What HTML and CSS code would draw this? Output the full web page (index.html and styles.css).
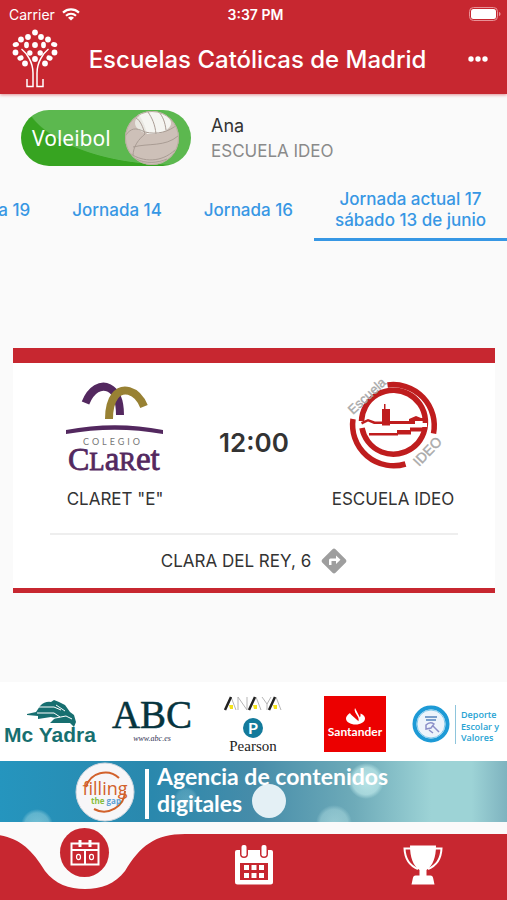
FILE: index.html
```html
<!DOCTYPE html>
<html lang="es">
<head>
<meta charset="UTF-8">
<meta name="viewport" content="width=device-width, initial-scale=1.0">
<title>Escuelas Católicas de Madrid</title>
<link rel="stylesheet" href="styles.css">
</head>
<body>

<header class="app-header">
    <div class="status-bar">
        <div class="carrier">
            <span>Carrier</span>
            <svg width="18" height="13" viewBox="0 0 18 13" fill="none" stroke="#fff" stroke-width="2.2">
                <path d="M1 4.6C5.6.4 12.4.4 17 4.6M4 7.8c2.9-2.6 7.1-2.6 10 0"/>
                <path d="M9 12.6L6 9.7c1.8-1.5 4.2-1.5 6 0z" fill="#fff" stroke="none"/>
            </svg>
        </div>
        <span class="clock">3:37 PM</span>
        <svg class="battery" width="33" height="14" viewBox="0 0 33 14">
            <rect x=".5" y=".5" width="28" height="13" rx="4" fill="none" stroke="#e89297"/>
            <rect x="2" y="2" width="25" height="10" rx="2.500" fill="#fff"/>
            <path d="M30 5c2 .6 2 3.400 0 4z" fill="#e89297"/>
        </svg>
    </div>
    <div class="title-bar">
        <svg class="tree" width="48" height="60" viewBox="0 0 48 60">
            <g fill="#fff">
                <circle cx="24" cy="3.500" r="2.900"/>
                <circle cx="17" cy="8" r="2.900"/>
                <circle cx="30" cy="8" r="2.900"/>
                <circle cx="10" cy="10.500" r="2.900"/>
                <circle cx="37" cy="10.500" r="2.900"/>
                <ellipse cx="4.800" cy="15.500" rx="3.200" ry="2.400" transform="rotate(-20 4.800 15.500)"/>
                <ellipse cx="15.500" cy="16" rx="2.400" ry="3.200"/>
                <circle cx="24" cy="16" r="2.900"/>
                <ellipse cx="32.500" cy="16" rx="2.400" ry="3.200"/>
                <ellipse cx="43.200" cy="15.500" rx="3.200" ry="2.400" transform="rotate(20 43.200 15.500)"/>
                <circle cx="4.500" cy="23.500" r="2.900"/>
                <circle cx="18.800" cy="24" r="2.700"/>
                <circle cx="29.200" cy="24" r="2.700"/>
                <circle cx="43.500" cy="23.500" r="2.900"/>
                <ellipse cx="9.500" cy="29" rx="3.200" ry="2.500" transform="rotate(-25 9.500 29)"/>
                <circle cx="24" cy="30" r="2.900"/>
                <ellipse cx="38.500" cy="29" rx="3.200" ry="2.500" transform="rotate(25 38.500 29)"/>
                <circle cx="14" cy="34.500" r="2.900"/>
                <circle cx="34" cy="34.500" r="2.900"/>
            </g>
            <g fill="none" stroke="#fff" stroke-width="1.500">
                <path d="M10.500 20c5 4 11.500 13 11.500 24v13.500h-6V50"/>
                <path d="M37.500 20c-5 4-11.500 13-11.500 24v13.500h6V50"/>
            </g>
        </svg>
        <h1>Escuelas Católicas de Madrid</h1>
        <button class="more" aria-label="Más opciones">
            <svg width="20" height="6" viewBox="0 0 20 6" fill="#fff">
                <circle cx="3" cy="3" r="2.700"/>
                <circle cx="10" cy="3" r="2.700"/>
                <circle cx="17" cy="3" r="2.700"/>
            </svg>
        </button>
    </div>
</header>

<section class="profile">
    <button class="sport">
        <span>Voleibol</span>
        <svg width="56" height="56" viewBox="0 0 56 56">
            <defs>
                <clipPath id="ball"><circle cx="28" cy="28" r="27"/></clipPath>
            </defs>
            <circle cx="28" cy="28" r="27" fill="#cdc0b8"/>
            <g clip-path="url(#ball)">
                <ellipse cx="29" cy="13" rx="18" ry="11" fill="#e9e8e2"/>
                <path d="M14 4c4 4 8 14 9 20 14 1 24-6 24-11-2-7-9-11-19-12z" fill="#f5f5f1"/>
                <path d="M12 8c4 2 7 9 9 16M24 2c4 6 7 12 8 22M35 2c4 5 6 10 7 18M1 26c6-8 10-9 20-4 12 3 24 0 33-8M21 24c-6 5-12 12-12 22M9 37c16-4 32 0 45-11M7 44c12 8 30 9 44-4M12 49c10 5 22 4 31 0" fill="none" stroke="#a99c94" stroke-width="1"/>
            </g>
            <circle cx="28" cy="28" r="26.500" fill="none" stroke="#b9ae9f"/>
        </svg>
    </button>
    <div class="player">
        <p class="player-name">Ana</p>
        <p class="player-team">ESCUELA IDEO</p>
    </div>
</section>

<nav class="tabs">
    <button class="tab">Jornada 19</button>
    <button class="tab">Jornada 14</button>
    <button class="tab">Jornada 16</button>
    <button class="tab active">Jornada actual 17<br>sábado 13 de junio</button>
</nav>

<main class="content">
    <article class="match">
        <div class="teams">
            <div class="team">
                <svg width="102" height="94" viewBox="0 0 102 94">
                    <path d="M21.500 23C27 9 37 4 45 8c8 4 11 13 11 27" fill="none" stroke="#53285f" stroke-width="8"/>
                    <path d="M45 39C45 18 54 8 65 11c7 2 12 8 15 15.500" fill="none" stroke="#988133" stroke-width="8"/>
                    <path d="M2 50Q51 40.500 99 50v4Q51 45.500 2 54z" fill="#53285f"/>
                    <text class="claret-top" x="19" y="65">COLEGIO</text>
                    <text class="claret-name" x="4" y="90">C<tspan class="cap">L</tspan><tspan class="low">a</tspan><tspan class="cap">R</tspan><tspan class="low">et</tspan></text>
                </svg>
                <p>CLARET "E"</p>
            </div>
            <time class="hour">12:00</time>
            <div class="team">
                <svg width="96" height="94" viewBox="0 0 96 94">
                    <g fill="none" stroke="#bf1d1e" stroke-width="5.500">
                        <path d="M42.500 5A41 41 0 0 1 88.500 53.500"/>
                        <path d="M8 39A41 41 0 0 0 60.500 84"/>
                        <path d="M16.500 41A32 32 0 1 1 17 48"/>
                    </g>
                    <path d="M14 45l8-4 9 3h32v-1h19v4H68v3H55v-3H30l-8-3-7 3z" fill="#fff"/>
                    <path d="M16 42l7-3 7 2.500h7V29h2v-5h1.500v5H45v12h19v-2l7-3 5 2h6v3H70v3H45v1.500h-8V44h-8l-6-2.500-6 3z" fill="#bf1d1e"/>
                    <path d="M24 53h28v-3h13v-2.500h16v4H66v3H53v1H24z" fill="#bf1d1e"/>
                    <text class="ideo-text" transform="translate(8 35) rotate(-43)">Escuela</text>
                    <text class="ideo-text big" transform="translate(74 87) rotate(-46)">IDEO</text>
                </svg>
                <p>ESCUELA IDEO</p>
            </div>
        </div>
        <a class="place" href="#">
            <span>CLARA DEL REY, 6</span>
            <svg width="26" height="26" viewBox="0 0 26 26">
                <path d="M13 .5q.8 0 1.500.7l10.300 10.300q1.400 1.500 0 3L14.500 24.800q-1.500 1.400-3 0L1.200 14.500q-1.400-1.500 0-3L11.500 1.200Q12.200.5 13 .5z" fill="#9e9e9e"/>
                <path d="M8 17v-5q0-1.500 1.500-1.500H15V7.500l4.500 4.300L15 16v-3h-4.500v4z" fill="#fff"/>
            </svg>
        </a>
    </article>
</main>

<section class="sponsors">
    <svg width="94" height="50" viewBox="0 0 94 50">
        <path d="M23 15l9-2 4-6q5-5 11-4l3-2 5 2 6 3 5 7 4 3 2 7-2 5-4-4H46l5-5-4-1-13 2v-3l-11-1z" fill="#176f70"/>
        <path d="M35 8h15l7 3M33 14h17l6 4M46 20l16-3 6 3M52 6l9 6" fill="none" stroke="#fff" stroke-width="1"/>
        <text class="yadra" x="0" y="43">Mc Yadra</text>
    </svg>
    <svg width="84" height="50" viewBox="0 0 84 50">
        <text class="abc" x="42" y="29">ABC</text>
        <text class="abc-web" x="42" y="42">www.abc.es</text>
    </svg>
    <svg width="62" height="60" viewBox="0 0 62 60">
        <g fill="none" stroke="#b5b5b5" stroke-width="1">
            <path d="M9 3l5 13M16 16V3l9 13V3M34 3l5 13M40 3l5 7 4-7M45 10v6M54 3l5 13"/>
        </g>
        <path d="M3 16l6-13M27 16l6-13M47 16l6-13" stroke="#222" stroke-width="2.500"/>
        <path d="M7 11h4v4H8zM31 11h4v4h-3zM51 11h4v4h-3z" fill="#f3e21b"/>
        <circle cx="31" cy="34" r="10" fill="#137a9b"/>
        <text class="pearson-p" x="31" y="40">P</text>
        <text class="pearson" x="31" y="57">Pearson</text>
    </svg>
    <svg width="62" height="56" viewBox="0 0 62 56">
        <path d="M0 0h62v56H0z" fill="#ec0000"/>
        <path d="M26 17c-3 2-4 4-4 5.500 0 3.500 4.500 6 9.500 6s9.500-2.500 9.500-6c0-2-1.500-4-4.500-5q.3 2-.6 4L31 12q-1 2 .3 4.400L34 21q1.200 2.300.5 4.300L27.500 19q-1.200-1-1.500-2z" fill="#fff"/>
        <text class="santander" x="31" y="40">Santander</text>
    </svg>
    <svg width="88" height="50" viewBox="0 0 88 50">
        <circle cx="19" cy="25" r="16.500" fill="#edf4fb" stroke="#1d9ad6" stroke-width="4"/>
        <circle cx="19" cy="25" r="14" fill="none" stroke="#80c8ea"/>
        <path d="M13 18h12M14 21h10" stroke="#5583bd" stroke-width="1.500"/>
        <path d="M14 26q4-4 8-1l-3 4-5 1zM21 27l6 6M17 31l4 3" fill="none" stroke="#8b8fc8" stroke-width="1.500"/>
        <path d="M43.500 6v39" stroke="#8ec5dc"/>
        <text class="deporte">
            <tspan x="49" y="19">Deporte</tspan>
            <tspan x="49" y="31">Escolar y</tspan>
            <tspan x="49" y="42">Valores</tspan>
        </text>
    </svg>
</section>

<a class="banner" href="#">
    <svg class="bokeh" viewBox="0 0 507 61" preserveAspectRatio="xMidYMid slice">
        <defs>
            <radialGradient id="spot">
                <stop offset="0" stop-color="#c8f0f0" stop-opacity=".8"/>
                <stop offset=".75" stop-color="#c8f0f0" stop-opacity=".6"/>
                <stop offset="1" stop-color="#c8f0f0" stop-opacity="0"/>
            </radialGradient>
        </defs>
        <circle cx="366" cy="20" r="18" fill="url(#spot)"/>
        <circle cx="37" cy="64" r="16" fill="url(#spot)" opacity=".6"/>
        <circle cx="334" cy="62" r="18" fill="url(#spot)" opacity=".6"/>
        <circle cx="186" cy="38" r="12" fill="url(#spot)" opacity=".3"/>
        <circle cx="269" cy="40" r="17" fill="#e4f0f5"/>
    </svg>
    <svg class="filling" width="60" height="60" viewBox="0 0 60 60">
        <circle cx="30" cy="30" r="29" fill="#f7f6f8" stroke="#cfd6de"/>
        <path d="M11 25A20 20 0 0 1 44 16M50 29A21 21 0 0 1 19 47" fill="none" stroke="#d2612b" stroke-width="2"/>
        <text class="fill-word" x="30" y="33">filling</text>
        <text class="fill-small" x="16" y="42"><tspan fill="#86bd3b">the</tspan> <tspan fill="#5c9fd6">gap</tspan></text>
    </svg>
    <span class="rule"></span>
    <strong>Agencia de contenidos<br>digitales</strong>
</a>

<nav class="bottom-nav">
    <a class="nav-item current" href="#" aria-label="Partidos">
        <svg class="notch" width="200" height="56" viewBox="0 0 200 56">
            <path d="M0 0C30 0 45 12 60 37c10 13 24 18 40 18s30-5 40-18C155 12 170 0 200 0z" fill="#fafafa"/>
        </svg>
        <span class="bubble">
            <svg width="30" height="28" viewBox="0 0 30 28">
                <path d="M1.500 4.500h27v21h-27zM1.500 11h27M15 11v14" fill="none" stroke="#fff" stroke-width="2"/>
                <path d="M10 1v7M20 1v7" stroke="#fff" stroke-width="3"/>
                <ellipse cx="8.500" cy="18" rx="2" ry="2.700" fill="none" stroke="#fff" stroke-width="1.200"/>
                <ellipse cx="21.500" cy="18" rx="2" ry="2.700" fill="none" stroke="#fff" stroke-width="1.200"/>
            </svg>
        </span>
    </a>
    <a class="nav-item" href="#" aria-label="Calendario">
        <svg width="40" height="40" viewBox="0 0 40 40">
            <path d="M3 5h34q2 0 2 2v30q0 2.500-2.500 2.500h-33Q1 39.500 1 37V7q0-2 2-2z" fill="#fff"/>
            <path d="M6 18h28v17H6z" fill="#c72730"/>
            <path d="M10 20h5v5h-5zM17.500 20h5v5h-5zM25 20h5v5h-5zM10 28h5v5h-5zM17.500 28h5v5h-5zM25 28h5v5h-5z" fill="#fff"/>
            <rect x="6" y="-1" width="8" height="14" rx="4" fill="#c72730"/>
            <rect x="26" y="-1" width="8" height="14" rx="4" fill="#c72730"/>
            <rect x="7.500" y="0" width="5" height="11.500" rx="2" fill="#fff"/>
            <rect x="27.500" y="0" width="5" height="11.500" rx="2" fill="#fff"/>
        </svg>
    </a>
    <a class="nav-item" href="#" aria-label="Clasificación">
        <svg width="40" height="40" viewBox="0 0 40 40">
            <path d="M7 .5h26c0 12-3 20-9.500 24.500v5.500h4q2 0 2.500 2l1.500 7h-23l1.500-7q.5-2 2.500-2h4V25C10 20.500 7 12.500 7 .5z" fill="#fff"/>
            <path d="M8 3.500H1.500C2 14 6 20.500 15 24M32 3.500h6.500C38 14 34 20.500 25 24" fill="none" stroke="#fff" stroke-width="2"/>
        </svg>
    </a>
</nav>

</body>
</html>
```

FILE: styles.css
```css
* {
    box-sizing: border-box;
}

body {
    margin: 0;
    min-height: 100vh;
    display: flex;
    flex-direction: column;
    font-family: Inter, "Liberation Sans", sans-serif;
    color: #333;
    background-color: #fafafa;
    overflow-x: hidden;
}

h1, p {
    margin: 0;
}

button {
    padding: 0;
    border: none;
    background: none;
    font-family: inherit;
    cursor: pointer;
}

a {
    color: inherit;
    text-decoration: none;
}

svg {
    display: block;
    flex-shrink: 0;
    overflow: visible;
}

/* header */
.app-header {
    background-color: #c72730;
    color: #fff;
    box-shadow: 0 1px 3px rgba(199, 39, 48, 0.5);
}

.status-bar {
    display: grid;
    grid-template-columns: 1fr auto 1fr;
    align-items: center;
    height: 28px;
    padding: 0 5px 0 9px;
    font-size: 14px;
}

.carrier {
    display: flex;
    align-items: center;
    gap: 7px;
}

.clock {
    font-weight: 600;
}

.battery {
    justify-self: end;
}

.title-bar {
    display: flex;
    align-items: center;
    justify-content: space-between;
    height: 66px;
    padding: 0 7px 4px 11px;
}

h1 {
    font-size: 24px;
    font-weight: 500;
    white-space: nowrap;
}

.more {
    width: 44px;
    height: 44px;
    display: flex;
    align-items: center;
    justify-content: center;
}

/* profile */
.profile {
    display: flex;
    align-items: center;
    gap: 20px;
    padding: 16px 21px 14px;
}

.sport {
    width: 170px;
    height: 56px;
    display: flex;
    align-items: center;
    justify-content: space-between;
    padding: 0 11px;
    border-radius: 28px;
    background: radial-gradient(ellipse 150px 75px at 150px -20px, #5cb84f 99%, #37a421 100%);
    color: #fff;
    font-family: "Noto Sans", sans-serif;
    font-size: 21px;
}

.player-name {
    font-size: 18px;
    line-height: 26px;
}

.player-team {
    font-size: 17px;
    line-height: 24px;
    color: #8a8a8a;
}

/* round tabs, scrolled to the current one */
.tabs {
    display: flex;
    justify-content: flex-end;
    overflow: hidden;
    height: 61px;
}

.tab {
    flex-shrink: 0;
    padding: 2px 21px 0;
    border-bottom: 3px solid transparent;
    color: #3797e4;
    font-size: 17px;
    font-weight: 500;
    line-height: 21px;
}

.tab.active {
    border-bottom-color: #3797e4;
}

/* match card */
.content {
    flex: 1;
    display: flex;
    align-items: center;
    padding: 18px 12px 0 13px;
}

.match {
    flex: 1;
    border-top: 15px solid #c72730;
    border-bottom: 5px solid #c72730;
    background-color: #fff;
    padding: 17px 37px 14px;
}

.teams {
    display: flex;
    align-items: center;
    justify-content: space-between;
    padding-bottom: 22px;
    border-bottom: 2px solid #eee;
}

.team {
    width: 130px;
    display: flex;
    flex-direction: column;
    align-items: center;
    gap: 13px;
    font-size: 17px;
    line-height: 24px;
    white-space: nowrap;
}

.hour {
    font-size: 26px;
    font-weight: 600;
    padding-bottom: 6px;
}

.place {
    display: flex;
    align-items: center;
    justify-content: center;
    gap: 10px;
    padding-top: 13px;
    font-size: 17px;
}

.claret-top {
    font: 9px Lato, sans-serif;
    letter-spacing: 3px;
    fill: #777;
}

.claret-name {
    font: 32px "Liberation Serif", serif;
    fill: #53285f;
    stroke: #53285f;
    stroke-width: 0.8;
}

.claret-name .cap {
    font-size: 25px;
}

.claret-name .low {
    font-size: 33px;
}

.ideo-text {
    font: 13px "Liberation Sans", sans-serif;
    fill: #aaa;
    stroke: #aaa;
    stroke-width: 0.4;
}

.ideo-text.big {
    font-size: 14px;
}

/* sponsors */
.sponsors {
    display: grid;
    grid-template-columns: repeat(5, 1fr);
    align-items: center;
    justify-items: center;
    height: 79px;
    padding-top: 4px;
    background-color: #fff;
}

.yadra {
    font: bold 21px "Liberation Sans", sans-serif;
    fill: #176f70;
}

.abc {
    font: 39px "Liberation Serif", serif;
    text-anchor: middle;
    fill: #06343e;
    stroke: #06343e;
    stroke-width: 0.5;
}

.abc-web {
    font: italic 8px "Liberation Serif", serif;
    text-anchor: middle;
    fill: #335;
}

.pearson-p {
    font: bold 16px Lato, sans-serif;
    text-anchor: middle;
    fill: #fff;
}

.pearson {
    font: 15px "Liberation Serif", serif;
    text-anchor: middle;
    fill: #222;
}

.santander {
    font: bold 12px Lato, sans-serif;
    text-anchor: middle;
    fill: #fff;
}

.deporte {
    font: 600 9px "Open Sans", sans-serif;
    fill: #27a3d3;
}

/* ad banner */
.banner {
    position: relative;
    display: flex;
    align-items: center;
    height: 61px;
    padding-left: 75px;
    background: linear-gradient(90deg, #2595be 0%, #2a88ad 30%, #468ca9 50%, #6eabb9 70%, #9dd3d6 85%, #9dd3d6 93%, #7eb3bf 100%);
    color: #fff;
}

.bokeh {
    position: absolute;
    inset: 0;
    width: 100%;
    height: 100%;
    overflow: hidden;
}

.filling,
.rule,
.banner strong {
    position: relative;
}

.rule {
    align-self: flex-end;
    width: 4px;
    height: 50px;
    margin: 0 8px 3px 10px;
    background-color: #fff;
}

.banner strong {
    padding-bottom: 3px;
    font: bold 23px/27px Lato, sans-serif;
}

.fill-word {
    font: 18px "Open Sans", sans-serif;
    text-anchor: middle;
    fill: #d2612b;
}

.fill-small {
    font: bold 8px "Open Sans", sans-serif;
}

/* bottom navigation */
.bottom-nav {
    display: flex;
    height: 66px;
    margin-top: 12px;
    background-color: #c72730;
}

.nav-item {
    flex: 1;
    display: flex;
    justify-content: center;
    padding-top: 11px;
}

.current {
    position: relative;
    padding-top: 0;
}

.notch {
    position: absolute;
    top: 0;
    left: 50%;
    margin-left: -100px;
}

.bubble {
    position: absolute;
    top: -6px;
    width: 49px;
    height: 49px;
    display: flex;
    align-items: center;
    justify-content: center;
    border-radius: 50%;
    background-color: #c72730;
}
```
